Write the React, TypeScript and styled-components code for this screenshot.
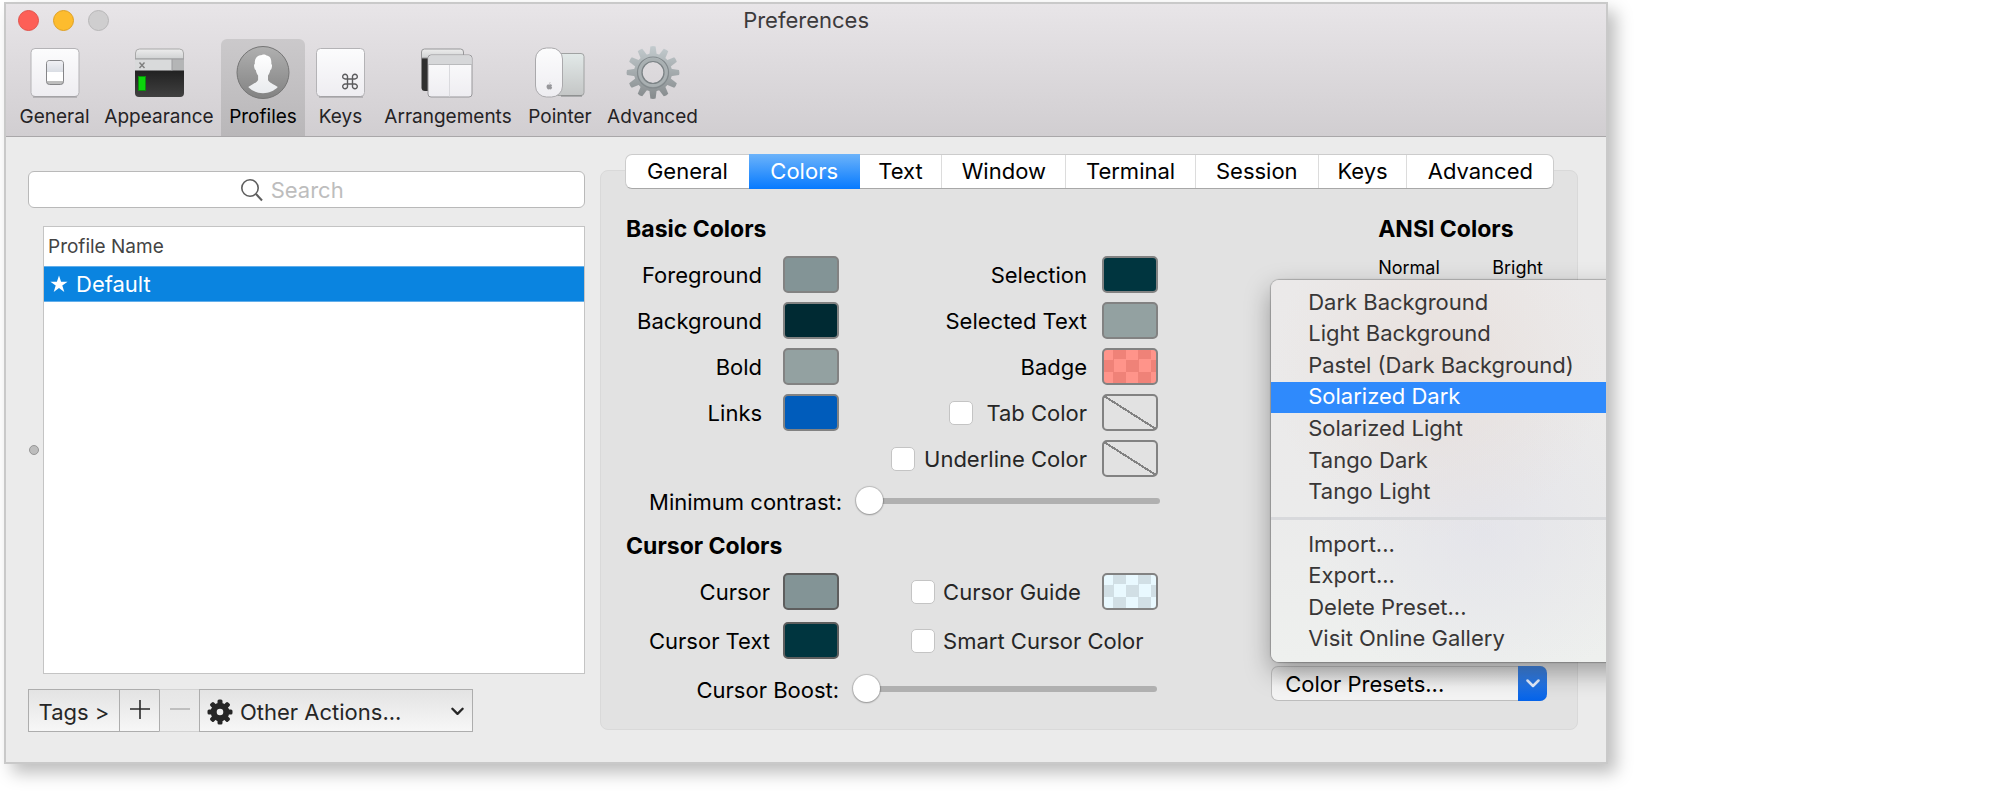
import React from 'react';
import styled, { createGlobalStyle, css } from 'styled-components';

const GlobalStyle = createGlobalStyle`
  *, *::before, *::after { box-sizing: border-box; }
  body {
    margin: 0;
    background: #ffffff;
    color: #000000;
    font-family: Inter, "Liberation Sans", sans-serif;
    font-size: 22px;
    line-height: 28px;
  }
  button, input, select { font: inherit; color: inherit; margin: 0; }
`;

const Window = styled.main`
  width: calc(80vw + 9px);
  min-width: 1320px;
  margin: 2px 4px 32px;
  border: 2px solid #c9c9c9;
  background: #ebebeb;
  box-shadow: 8px 9px 16px rgba(0, 0, 0, 0.26);
  overflow: hidden;
`;

/* Title bar and toolbar */

const Header = styled.header`
  background: linear-gradient(#e8e5e8, #d1ced1);
  border-bottom: 1px solid #a9a7a9;
`;

const TitleBar = styled.div`
  display: grid;
  grid-template-columns: 1fr auto 1fr;
  align-items: center;
  height: 35px;
  padding: 0 12px;
`;

const Lights = styled.div`
  display: flex;
  gap: 14px;
  padding-bottom: 3px;
`;

const Light = styled.button<{ $fill: string; $edge: string }>`
  width: 21px;
  height: 21px;
  padding: 0;
  border: 1px solid ${(p) => p.$edge};
  border-radius: 50%;
  background: ${(p) => p.$fill};
`;

const Title = styled.h1`
  margin: 0;
  padding-bottom: 4px;
  font-size: 22px;
  font-weight: 400;
  line-height: 28px;
  color: #3c3a3c;
`;

const Toolbar = styled.nav`
  display: grid;
  grid-template-columns: 85px 124px 84px 71px 144px 80px 105px;
  padding: 0 6px;
`;

const ToolButton = styled.button<{ $active?: boolean }>`
  display: flex;
  flex-direction: column;
  align-items: center;
  gap: 4px;
  height: 97px;
  padding: 5px 0 0;
  border: 0;
  border-radius: 6px 6px 0 0;
  background: ${(p) => (p.$active ? 'linear-gradient(#cbc9cb, #b9b7b9)' : 'none')};
  color: ${(p) => (p.$active ? '#000000' : '#252325')};
  font-size: 19px;
  line-height: 26px;
  white-space: nowrap;
`;

/* Body */

const Body = styled.div`
  display: grid;
  grid-template-columns: minmax(0, 557fr) minmax(0, 978fr);
  gap: 15px;
  padding: 17px 28px 30px 22px;
`;

const ProfilesPane = styled.section`
  display: flex;
  flex-direction: column;
  padding-top: 17px;
`;

const SearchField = styled.label`
  display: flex;
  align-items: center;
  gap: 8px;
  height: 37px;
  padding: 1px 0 0 38%;
  border: 1px solid #b9b9b9;
  border-radius: 6px;
  background: #ffffff;
`;

const SearchInput = styled.input`
  flex: 1;
  min-width: 0;
  height: 28px;
  padding: 0;
  border: 0;
  outline: 0;
  background: none;
  &::placeholder { color: #bdbdbd; opacity: 1; }
`;

const ListRow = styled.div`
  display: grid;
  grid-template-columns: 15px 1fr;
  align-items: center;
  flex: 1;
  margin: 18px 0 15px;
`;

const SplitHandle = styled.span`
  width: 10px;
  height: 10px;
  margin-left: 1px;
  border: 1px solid #969696;
  border-radius: 50%;
  background: #bdbdbd;
`;

const ListBox = styled.div`
  align-self: stretch;
  border: 1px solid #c4c4c4;
  background: #ffffff;
`;

const ProfileTable = styled.table`
  width: 100%;
  border-collapse: collapse;
  text-align: left;

  th {
    height: 39px;
    padding: 1px 4px 0;
    font-size: 19px;
    font-weight: 400;
    color: #444444;
  }
  td {
    height: 35px;
    padding: 1px 7px 0 6px;
    border: solid #62aeea;
    border-width: 1px 0;
    background: #0a84e0;
    color: #ffffff;
  }
`;

const CellContent = styled.span`
  display: flex;
  align-items: center;
  gap: 8px;
`;

const ActionBar = styled.div`
  display: flex;
  height: 43px;
`;

const barSurface = css`
  border: 1px solid #adadad;
  background: linear-gradient(#e3e3e3, #f7f7f7);
  color: #262626;
`;

const BarButton = styled.button<{ $width: number }>`
  ${barSurface}
  display: flex;
  align-items: center;
  justify-content: center;
  width: ${(p) => p.$width}px;
  padding: 2px 0 0;
  border-right-width: 0;
  white-space: nowrap;
  &:disabled {
    border-color: #d2d2d2;
    border-left-color: #adadad;
    background: linear-gradient(#e6e6e6, #eeeeee);
  }
`;

const ActionMenu = styled.label`
  ${barSurface}
  display: flex;
  align-items: center;
  gap: 7px;
  width: 274px;
  padding: 2px 8px 0 7px;
`;

const BareSelect = styled.select`
  flex: 1;
  min-width: 0;
  height: 30px;
  padding: 0;
  border: 0;
  outline: 0;
  background: none;
  appearance: none;
`;

/* Settings panel */

const Panel = styled.section`
  display: flex;
  flex-direction: column;
  margin: 16px 0 2px;
  border: 1px solid #d9d9d9;
  border-radius: 8px;
  background: #e2e2e2;
`;

const Tabs = styled.div`
  display: grid;
  grid-template-columns: 124fr 110fr 83fr 124fr 130fr 123fr 89fr 146fr;
  height: 35px;
  margin: -17px 23px 0 24px;
  border: 1px solid #cccccc;
  border-bottom-color: #a8a8a8;
  border-radius: 7px;
  background: #ffffff;
`;

const Tab = styled.button<{ $active?: boolean }>`
  padding: 0 0 2px;
  border: 0;
  border-right: 1px solid #dcdcdc;
  background: none;
  white-space: nowrap;
  &:last-child { border-right: 0; }
  ${(p) =>
    p.$active &&
    css`
      margin: -1px 0 -1px -1px;
      border-right: 0;
      background: linear-gradient(#6cb3fa, #067aff);
      color: #ffffff;
    `}
`;

const PanelContent = styled.div`
  display: flex;
  justify-content: space-between;
  flex: 1;
  padding: 26px 30px 26px 25px;
`;

const Settings = styled.div`
  display: flex;
  flex-direction: column;
  width: 534px;
`;

const Heading = styled.h2<{ $top?: number }>`
  margin: ${(p) => p.$top ?? 0}px 0 0;
  font-size: 23px;
  font-weight: 700;
  line-height: 28px;
`;

const Group = styled.div<{ $gap: number }>`
  display: flex;
  justify-content: space-between;
  padding: 13px 2px 0 0;
  --row-gap: ${(p) => p.$gap}px;
`;

const Stack = styled.div<{ $width: number }>`
  display: flex;
  flex-direction: column;
  gap: var(--row-gap);
  width: ${(p) => p.$width}px;
`;

const Row = styled.div<{ $gap: number; $start?: boolean }>`
  display: flex;
  align-items: center;
  justify-content: ${(p) => (p.$start ? 'space-between' : 'flex-end')};
  gap: ${(p) => p.$gap}px;
  height: 37px;
  white-space: nowrap;
`;

const FieldLabel = styled.label`
  padding-top: 1px;
`;

const CheckLabel = styled.label<{ $gap: number }>`
  display: flex;
  align-items: center;
  gap: ${(p) => p.$gap}px;
  padding-top: 1px;
  color: #262626;
`;

const CheckBox = styled.input.attrs({ type: 'checkbox' })`
  width: 24px;
  height: 24px;
  border: 1px solid #c4c4c4;
  border-radius: 5px;
  background: #ffffff;
  appearance: none;
`;

const Well = styled.input.attrs({ type: 'color' })<{ $paint: string; $edge?: string }>`
  flex: none;
  width: 56px;
  height: 37px;
  padding: 0;
  border: 2px solid ${(p) => p.$edge ?? '#828282'};
  border-radius: 5px;
  background: ${(p) => p.$paint};
  appearance: none;
  &::-webkit-color-swatch-wrapper { padding: 0; }
  &::-webkit-color-swatch { border: 0; opacity: 0; }
`;

const SliderRow = styled.div<{ $top: number; $inset: number }>`
  display: flex;
  align-items: center;
  justify-content: flex-end;
  gap: 14px;
  height: 28px;
  margin-top: ${(p) => p.$top}px;
  padding-right: ${(p) => p.$inset}px;
  white-space: nowrap;
`;

const Slider = styled.input.attrs({ type: 'range' })`
  width: 304px;
  height: 28px;
  background: none;
  appearance: none;
  &::-webkit-slider-runnable-track {
    height: 6px;
    border-radius: 3px;
    background: #b0b0b0;
  }
  &::-webkit-slider-thumb {
    width: 27px;
    height: 27px;
    margin-top: -11px;
    border-radius: 50%;
    background: #ffffff;
    box-shadow: 0 0 1px 1px rgba(0, 0, 0, 0.16), 0 1px 2px rgba(0, 0, 0, 0.22);
    appearance: none;
  }
`;

const AnsiColumn = styled.div`
  display: flex;
  flex-direction: column;
  width: 276px;
`;

const AnsiHead = styled.div`
  padding-left: 107px;
`;

const AnsiLabels = styled.div`
  display: grid;
  grid-template-columns: 114px auto;
  padding-top: 14px;
  font-size: 18px;
  line-height: 22px;
`;

const PresetField = styled.div`
  position: relative;
  margin: auto 0 2px;
`;

const PresetSelect = styled.label`
  display: flex;
  align-items: center;
  height: 35px;
  padding-left: 13px;
  border: 1px solid #bdbdbd;
  border-right: 0;
  border-radius: 7px;
  background: linear-gradient(#dedede, #f4f4f4 60%);
`;

const PresetArrow = styled.span`
  display: grid;
  place-items: center;
  align-self: stretch;
  width: 29px;
  margin: -1px 0;
  border-radius: 0 7px 7px 0;
  background: linear-gradient(#4486e0, #0463ea);
`;

const Menu = styled.div`
  position: absolute;
  bottom: calc(100% + 4px);
  left: 0;
  width: 380px;
  padding: 7px 0;
  border-radius: 8px;
  background:
    radial-gradient(circle at 44% 24%, rgba(230, 218, 212, 0.6), transparent 46%),
    radial-gradient(circle at 56% 66%, rgba(224, 224, 233, 0.6), transparent 50%),
    linear-gradient(#ebe9e9, #ebebeb 60%, #eef0ee);
  box-shadow: 0 0 1px 1px rgba(0, 0, 0, 0.22), 0 10px 26px rgba(0, 0, 0, 0.34);
`;

const MenuGroup = styled.div<{ $height: number }>`
  display: grid;
  grid-auto-rows: 1fr;
  min-height: ${(p) => p.$height}px;
`;

const MenuItem = styled.button<{ $active?: boolean }>`
  padding: 0 37px 2px;
  border: 0;
  background: ${(p) => (p.$active ? '#2f8afc' : 'none')};
  color: ${(p) => (p.$active ? '#ffffff' : '#383636')};
  text-align: left;
  white-space: nowrap;
`;

const MenuRule = styled.hr`
  height: 3px;
  margin: 9px 0;
  border: 0;
  background: #d8d9dc;
`;

const Glyph = styled.svg`
  display: block;
  flex: none;
`;

/* Icons */

const GeneralIcon = () => (
  <Glyph width="54" height="56" viewBox="0 0 54 56">
    <defs>
      <linearGradient id="tile" x1="0" y1="0" x2="0" y2="1">
        <stop offset="0" stopColor="#fcfcfd" /><stop offset="1" stopColor="#eeedf1" />
      </linearGradient>
      <linearGradient id="switch" x1="0" y1="0" x2="0" y2="1">
        <stop offset="0" stopColor="#f0f0f4" /><stop offset="1" stopColor="#d8dce3" />
      </linearGradient>
    </defs>
    <rect x="3" y="4.500" width="48" height="48" rx="4" fill="url(#tile)" stroke="#b4b3b6" />
    <path d="M5 53h44" stroke="#949396" />
    <rect x="18.500" y="16.500" width="17" height="24" rx="3" fill="#bdbdbd" stroke="#858588" />
    <rect x="19" y="17" width="16" height="12" rx="2" fill="url(#switch)" />
    <rect x="19" y="28" width="16" height="9" fill="#ffffff" />
  </Glyph>
);

const AppearanceIcon = () => (
  <Glyph width="54" height="56" viewBox="0 0 54 56">
    <defs>
      <linearGradient id="screen" x1="0" y1="0" x2="0" y2="1">
        <stop offset="0" stopColor="#212121" /><stop offset="1" stopColor="#404040" />
      </linearGradient>
      <linearGradient id="chrome" x1="0" y1="0" x2="0" y2="1">
        <stop offset="0" stopColor="#ededed" /><stop offset="1" stopColor="#cfd1d2" />
      </linearGradient>
    </defs>
    <path d="M3 26h49v23q0 4-4 4H7q-4 0-4-4z" fill="url(#screen)" />
    <path d="M3.500 15V9q0-4 4-4h40q4 0 4 4v6z" fill="url(#chrome)" stroke="#a9a9a9" />
    <path d="M3 15h37v11.500H3z" fill="#d9dadb" />
    <path d="M40 15h12v11.500H40z" fill="#b4b5b6" />
    <path d="M3 15h49M40 15v11.500" stroke="#9b9c9e" />
    <path d="M7.500 18.500l5 5.500M12.500 18.500l-5 5.500" stroke="#7e7e7e" strokeWidth="1.400" />
    <rect x="6.500" y="32.500" width="7" height="14" fill="#0bd40b" stroke="#0a8f0a" strokeWidth="1" />
  </Glyph>
);

const ProfilesIcon = () => (
  <Glyph width="54" height="56" viewBox="0 0 54 56">
    <defs>
      <linearGradient id="disc" x1="0" y1="0" x2="0" y2="1">
        <stop offset="0" stopColor="#b0b0b0" /><stop offset="1" stopColor="#828282" />
      </linearGradient>
      <linearGradient id="person" x1="0" y1="0" x2="0" y2="1">
        <stop offset="0" stopColor="#ffffff" /><stop offset="1" stopColor="#e9ebee" />
      </linearGradient>
    </defs>
    <circle cx="27" cy="28.500" r="26" fill="url(#disc)" stroke="#757575" />
    <path
      d="M18.800 20C18.500 14 21.500 11 26 11c1.500-.8 3.500-.3 4.500.6 3.500.3 5.200 3.600 4.800 8.400 1 .4.800 2.600.3 4.200-.3 1-.7 1.600-1.300 1.700-.4 2.500-1.400 4-2.300 5.700v4.200c.4 2.600 5.800 4.500 9.800 7.300-3.700 3.900-8.900 6.100-14.800 6.100s-11.100-2.200-14.800-6.100c4-2.800 9.400-4.700 9.900-7.300v-4.200c-1-1.700-1.900-3.200-2.300-5.700-.7-.1-1-.7-1.300-1.700-.5-1.600-.8-3.800.3-4.200z"
      fill="url(#person)"
    />
  </Glyph>
);

const KeysIcon = () => (
  <Glyph width="54" height="56" viewBox="0 0 54 56">
    <rect x="2.500" y="4.500" width="48" height="48" rx="4" fill="url(#tile)" stroke="#b4b3b6" />
    <path d="M5 53h44" stroke="#949396" />
    <path
      d="M33.500 35h5v5h-5zM33.500 35h-2.300a2.400 2.400 0 1 1 2.300-2.400zM38.500 35v-2.400a2.400 2.400 0 1 1 2.300 2.400zM38.500 40h2.300a2.400 2.400 0 1 1-2.300 2.400zM33.500 40v2.400a2.400 2.400 0 1 1-2.300-2.400z"
      fill="none"
      stroke="#5c5c5e"
      strokeWidth="1.400"
    />
  </Glyph>
);

const ArrangementsIcon = () => (
  <Glyph width="54" height="56" viewBox="0 0 54 56">
    <path d="M.5 14h8v33H4q-3.500 0-3.500-3.500z" fill="#303030" />
    <path d="M.5 14V8q0-3 3-3h36q3 0 3 3v6z" fill="url(#chrome)" stroke="#979799" />
    <rect x="7" y="11" width="44" height="42" rx="3" fill="url(#tile)" stroke="#98979a" />
    <path d="M7.500 20.500V14q0-2.500 2.500-2.500h38q2.500 0 2.500 2.500v6.500z" fill="#d6d7d9" />
    <path d="M7 20.500h44" stroke="#b9babc" />
    <path d="M28.500 21v31.500" stroke="#dadade" />
  </Glyph>
);

const PointerIcon = () => (
  <Glyph width="54" height="56" viewBox="0 0 54 56">
    <defs>
      <linearGradient id="pad" x1="0" y1="0" x2="0" y2="1">
        <stop offset="0" stopColor="#e2e9e8" /><stop offset="1" stopColor="#c4c6c6" />
      </linearGradient>
    </defs>
    <rect x="15.500" y="9.500" width="35.500" height="42" rx="3" fill="url(#pad)" stroke="#a0a2a2" />
    <path d="M28 52h21" stroke="#7f8181" />
    <rect x="2.500" y="4" width="27" height="49" rx="11" fill="url(#tile)" stroke="#aaa9ac" />
    <path
      d="M17 38.300c1.300 0 1.800-1 1.700-2-1.200.1-1.800 1-1.700 2zm3.200 4.500c0-1.200.8-1.700 1-2-1-1.400-2.600-1.400-3.200-1.200-.7.300-1 .3-1.500.1-1.300-.5-3.500.2-3.500 3 0 2.500 1.700 4.400 2.800 4.300.8-.1 1-.3 1.500-.3.700 0 .9.300 1.600.3 1.200 0 2-1.600 2.400-2.700-.7-.3-1.100-.8-1.100-1.500z"
      fill="#97979b"
      transform="translate(4.700 13.500) scale(.68)"
    />
  </Glyph>
);

const TEETH = Array.from({ length: 12 }, (_, i) => i * 30);

const AdvancedIcon = () => (
  <Glyph width="54" height="56" viewBox="0 0 54 56">
    <defs>
      <linearGradient id="steel" gradientUnits="userSpaceOnUse" x1="0" y1="2" x2="0" y2="55">
        <stop offset="0" stopColor="#c3cbce" /><stop offset="1" stopColor="#858a8c" />
      </linearGradient>
      <mask id="cog">
        {TEETH.map((a) => (
          <path key={a} d="M24.400 2.500q2.600-.8 5.200 0l1.300 10h-7.800z" fill="#fff" transform={`rotate(${a} 27 28.500)`} />
        ))}
        <circle cx="27" cy="28.500" r="19" fill="#fff" />
        <circle cx="27" cy="28.500" r="10.500" fill="#000" />
      </mask>
    </defs>
    <rect width="54" height="56" fill="url(#steel)" mask="url(#cog)" />
    <circle cx="27" cy="28.500" r="15.500" fill="none" stroke="#838a8d" strokeWidth="1.200" />
    <circle cx="27" cy="28.500" r="13" fill="none" stroke="#a9b0b2" strokeWidth="3" />
    <circle cx="27" cy="28.500" r="11" fill="none" stroke="#7c8386" strokeWidth="1.200" />
  </Glyph>
);

const SearchIcon = () => (
  <Glyph width="22" height="24" viewBox="0 0 22 24" fill="none" stroke="#5e5e5e" strokeWidth="1.600">
    <circle cx="9" cy="10" r="8.200" />
    <path d="M15 16l6 6.500" strokeWidth="2" />
  </Glyph>
);

const StarIcon = () => (
  <Glyph width="18" height="18" viewBox="0 0 18 18">
    <path d="M9 .5l2.100 6.200h6.500l-5.300 3.900 2 6.400L9 13.100 3.700 17l2-6.400L.4 6.700h6.500z" fill="#ffffff" />
  </Glyph>
);

const PlusIcon = () => (
  <Glyph width="20" height="24" viewBox="0 0 20 24">
    <path d="M0 9h20M10 0v19" stroke="#2a2a2a" strokeWidth="1.600" />
  </Glyph>
);

const MinusIcon = () => (
  <Glyph width="20" height="24" viewBox="0 0 20 24">
    <path d="M0 9h20" stroke="#b5b5b5" strokeWidth="1.600" />
  </Glyph>
);

const SmallGear = () => (
  <Glyph width="26" height="26" viewBox="0 0 26 26">
    {[0, 45, 90, 135, 180, 225, 270, 315].map((a) => (
      <rect key={a} x="10.500" y="0.500" width="5" height="8" rx="1.500" fill="#262626" transform={`rotate(${a} 13 13)`} />
    ))}
    <circle cx="13" cy="13" r="6.300" fill="none" stroke="#262626" strokeWidth="6" />
  </Glyph>
);

const Chevron = ({ color, width, height }: { color: string; width: number; height: number }) => (
  <Glyph width={width} height={height} viewBox="0 0 14 9" fill="none" stroke={color} strokeWidth="2.500" strokeLinecap="round" strokeLinejoin="round">
    <path d="M1.500 1.500L7 7l5.500-5.500" />
  </Glyph>
);

/* Data */

const tools: { name: string; icon: React.ReactNode }[] = [
  { name: 'General', icon: <GeneralIcon /> },
  { name: 'Appearance', icon: <AppearanceIcon /> },
  { name: 'Profiles', icon: <ProfilesIcon /> },
  { name: 'Keys', icon: <KeysIcon /> },
  { name: 'Arrangements', icon: <ArrangementsIcon /> },
  { name: 'Pointer', icon: <PointerIcon /> },
  { name: 'Advanced', icon: <AdvancedIcon /> },
];

const tabs = ['General', 'Colors', 'Text', 'Window', 'Terminal', 'Session', 'Keys', 'Advanced'];

const presets = ['Dark Background', 'Light Background', 'Pastel (Dark Background)', 'Solarized Dark', 'Solarized Light', 'Tango Dark', 'Tango Light'];
const presetActions = ['Import...', 'Export...', 'Delete Preset...', 'Visit Online Gallery'];

const checker = (light: string, dark: string) =>
  `conic-gradient(${dark} 25%, ${light} 0 50%, ${dark} 0 75%, ${light} 0) -3px -3px / 25px 25px`;
const emptyWell =
  'linear-gradient(to top right, transparent calc(50% - 1px), #828282 calc(50% - 1px) calc(50% + 1px), transparent calc(50% + 1px))';

interface ColorFieldProps {
  id: string;
  label: string;
  gap: number;
  value: string;
  paint?: string;
  edge?: string;
}

const ColorField = ({ id, label, gap, value, paint, edge }: ColorFieldProps) => (
  <Row $gap={gap}>
    <FieldLabel htmlFor={id}>{label}</FieldLabel>
    <Well id={id} defaultValue={value} $paint={paint ?? value} $edge={edge} />
  </Row>
);

export default function App() {
  return (
    <>
      <GlobalStyle />
      <Window>
        <Header>
          <TitleBar>
            <Lights>
              <Light aria-label="Close" $fill="#fd5f57" $edge="#e2524b" />
              <Light aria-label="Minimize" $fill="#fdbc2e" $edge="#dfa023" />
              <Light aria-label="Zoom" $fill="#cfcecf" $edge="#b8b7b8" disabled />
            </Lights>
            <Title>Preferences</Title>
          </TitleBar>
          <Toolbar>
            {tools.map((t) => (
              <ToolButton key={t.name} $active={t.name === 'Profiles'}>
                {t.icon}
                {t.name}
              </ToolButton>
            ))}
          </Toolbar>
        </Header>

        <Body>
          <ProfilesPane>
            <SearchField>
              <SearchIcon />
              <SearchInput type="search" placeholder="Search" aria-label="Search" />
            </SearchField>
            <ListRow>
              <SplitHandle />
              <ListBox>
                <ProfileTable>
                  <thead>
                    <tr><th scope="col">Profile Name</th></tr>
                  </thead>
                  <tbody>
                    <tr><td><CellContent><StarIcon />Default</CellContent></td></tr>
                  </tbody>
                </ProfileTable>
              </ListBox>
            </ListRow>
            <ActionBar>
              <BarButton $width={91}>Tags &gt;</BarButton>
              <BarButton $width={40} aria-label="Add profile"><PlusIcon /></BarButton>
              <BarButton $width={40} aria-label="Remove profile" disabled><MinusIcon /></BarButton>
              <ActionMenu>
                <SmallGear />
                <BareSelect aria-label="Other actions"><option>Other Actions...</option></BareSelect>
                <Chevron color="#262626" width={13} height={9} />
              </ActionMenu>
            </ActionBar>
          </ProfilesPane>

          <Panel>
            <Tabs role="tablist">
              {tabs.map((t) => (
                <Tab key={t} role="tab" aria-selected={t === 'Colors'} $active={t === 'Colors'}>{t}</Tab>
              ))}
            </Tabs>
            <PanelContent>
              <Settings>
                <Heading>Basic Colors</Heading>
                <Group $gap={9}>
                  <Stack $width={213}>
                    <ColorField id="fg" label="Foreground" gap={21} value="#839496" />
                    <ColorField id="bg" label="Background" gap={21} value="#002b36" paint="#002a33" />
                    <ColorField id="bold" label="Bold" gap={21} value="#93a1a1" />
                    <ColorField id="links" label="Links" gap={21} value="#005cbb" />
                  </Stack>
                  <Stack $width={280}>
                    <ColorField id="sel" label="Selection" gap={15} value="#00353f" />
                    <ColorField id="seltext" label="Selected Text" gap={15} value="#93a1a1" />
                    <ColorField id="badge" label="Badge" gap={15} value="#ff948a" paint={checker('#ff948a', '#ef8278')} />
                    <Row $gap={15}>
                      <CheckLabel $gap={13}><CheckBox />Tab Color</CheckLabel>
                      <Well aria-label="Tab color well" $paint={emptyWell} disabled />
                    </Row>
                    <Row $gap={15}>
                      <CheckLabel $gap={9}><CheckBox />Underline Color</CheckLabel>
                      <Well aria-label="Underline color well" $paint={emptyWell} disabled />
                    </Row>
                  </Stack>
                </Group>
                <SliderRow $top={10} $inset={0}>
                  <FieldLabel htmlFor="contrast">Minimum contrast:</FieldLabel>
                  <Slider id="contrast" defaultValue={0} />
                </SliderRow>
                <Heading $top={17}>Cursor Colors</Heading>
                <Group $gap={12}>
                  <Stack $width={213}>
                    <ColorField id="cursor" label="Cursor" gap={13} value="#839496" edge="#5e5e5e" />
                    <ColorField id="cursortext" label="Cursor Text" gap={13} value="#00353f" edge="#5e5e5e" />
                  </Stack>
                  <Stack $width={247}>
                    <Row $gap={8} $start>
                      <CheckLabel $gap={8}><CheckBox />Cursor Guide</CheckLabel>
                      <Well aria-label="Cursor guide color" defaultValue="#e8f8ff" $paint={checker('#e9f9ff', '#d1dfe5')} />
                    </Row>
                    <Row $gap={8} $start>
                      <CheckLabel $gap={8}><CheckBox />Smart Cursor Color</CheckLabel>
                    </Row>
                  </Stack>
                </Group>
                <SliderRow $top={16} $inset={3}>
                  <FieldLabel htmlFor="boost">Cursor Boost:</FieldLabel>
                  <Slider id="boost" defaultValue={0} />
                </SliderRow>
              </Settings>

              <AnsiColumn>
                <AnsiHead>
                  <Heading>ANSI Colors</Heading>
                  <AnsiLabels>
                    <span>Normal</span>
                    <span>Bright</span>
                  </AnsiLabels>
                </AnsiHead>
                <PresetField>
                  <PresetSelect>
                    <BareSelect aria-label="Color presets"><option>Color Presets...</option></BareSelect>
                    <PresetArrow><Chevron color="#e6efff" width={14} height={9} /></PresetArrow>
                  </PresetSelect>
                  <Menu role="menu">
                    <MenuGroup $height={221}>
                      {presets.map((p) => (
                        <MenuItem key={p} role="menuitem" $active={p === 'Solarized Dark'}>{p}</MenuItem>
                      ))}
                    </MenuGroup>
                    <MenuRule />
                    <MenuGroup $height={126}>
                      {presetActions.map((p) => (
                        <MenuItem key={p} role="menuitem">{p}</MenuItem>
                      ))}
                    </MenuGroup>
                  </Menu>
                </PresetField>
              </AnsiColumn>
            </PanelContent>
          </Panel>
        </Body>
      </Window>
    </>
  );
}
